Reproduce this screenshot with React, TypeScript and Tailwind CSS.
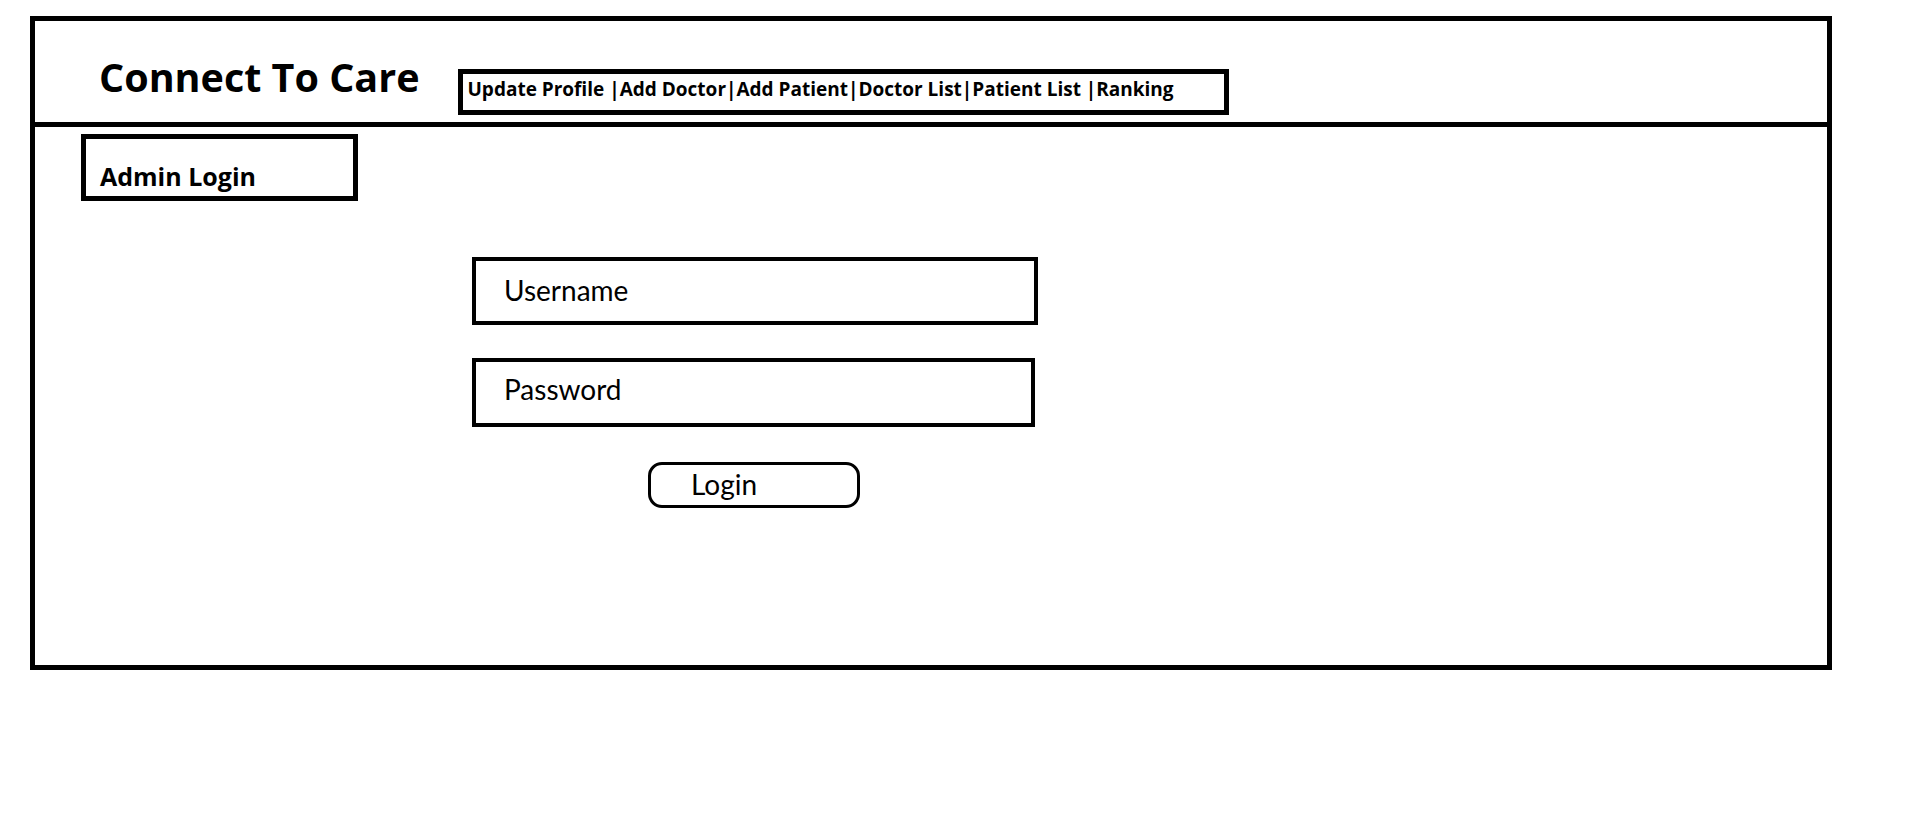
const navText = "Update Profile |Add Doctor|Add Patient|Doctor List|Patient List |Ranking";

export default function App() {
  return (
    <div className="min-h-screen bg-white pl-[30px] pt-[16px] text-black font-['Lato','Liberation_Sans',sans-serif]">
      <div className="flex h-[654px] w-[1802px] flex-col border-[5px] border-black">
        {/* HEADER */}
        <header className="flex h-[106px] items-start border-b-[5px] border-black">
          <h1 className="ml-[64px] mt-[37px] font-['Open_Sans',sans-serif] text-[39.5px] font-bold leading-none whitespace-nowrap">
            Connect To Care
          </h1>
          <nav className="ml-[38px] mt-[48px] h-[46px] w-[771px] border-[5px] border-black pl-[5px] pt-[6px]">
            <div className="font-['Open_Sans',sans-serif] text-[19px] font-bold leading-none whitespace-nowrap">
              {navText}
            </div>
          </nav>
        </header>

        {/* CONTENT */}
        <main className="flex flex-col">
          <div className="ml-[46px] mt-[7px] h-[67px] w-[277px] border-[5px] border-black pl-[14px] pt-[25px]">
            <div className="font-['Open_Sans',sans-serif] text-[25px] font-bold leading-none">Admin Login</div>
          </div>

          <div className="ml-[437px] mt-[56px] h-[68px] w-[566px] border-[4px] border-black pl-[28px] pt-[15px]">
            <div className="text-[28px] leading-none">Username</div>
          </div>

          <div className="ml-[437px] mt-[33px] h-[69px] w-[563px] border-[4px] border-black pl-[28px] pt-[13px]">
            <div className="text-[28px] leading-none">Password</div>
          </div>

          <button className="ml-[613px] mt-[35px] h-[46px] w-[212px] rounded-[14px] border-[3.5px] border-black pl-[40px] pt-[1px] text-left">
            <span className="text-[28px] leading-none">Login</span>
          </button>
        </main>
      </div>
    </div>
  );
}
